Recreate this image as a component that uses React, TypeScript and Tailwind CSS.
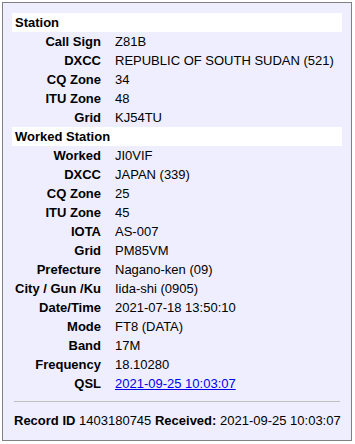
const station: [string, string][] = [
  ['Call Sign', 'Z81B'],
  ['DXCC', 'REPUBLIC OF SOUTH SUDAN (521)'],
  ['CQ Zone', '34'],
  ['ITU Zone', '48'],
  ['Grid', 'KJ54TU'],
];

const worked: [string, string][] = [
  ['Worked', 'JI0VIF'],
  ['DXCC', 'JAPAN (339)'],
  ['CQ Zone', '25'],
  ['ITU Zone', '45'],
  ['IOTA', 'AS-007'],
  ['Grid', 'PM85VM'],
  ['Prefecture', 'Nagano-ken (09)'],
  ['City / Gun /Ku', 'Iida-shi (0905)'],
  ['Date/Time', '2021-07-18 13:50:10'],
  ['Mode', 'FT8 (DATA)'],
  ['Band', '17M'],
  ['Frequency', '18.10280'],
];

function Header({ title }: { title: string }) {
  return <div className="h-[19px] bg-white pl-[3px] font-bold leading-[19px]">{title}</div>;
}

function Row({ label, children }: { label: string; children: React.ReactNode }) {
  return (
    <div className="grid h-[19px] grid-cols-[92px_1fr] leading-[19px]">
      <div className="whitespace-nowrap pr-[3px] text-right font-bold">{label}</div>
      <div className="whitespace-nowrap pl-[11px]">{children}</div>
    </div>
  );
}

export default function App() {
  return (
    <div
      className="ml-[2px] mt-[2px] h-[439px] w-[350px] border border-[#808080] bg-[#eeeeff] px-[9px] pt-[10px] text-[13px] text-black"
      style={{ fontFamily: '"Liberation Sans", Arial, sans-serif' }}
    >
      <Header title="Station" />
      {station.map(([l, v]) => (
        <Row key={'s' + l} label={l}>{v}</Row>
      ))}
      <Header title="Worked Station" />
      {worked.map(([l, v]) => (
        <Row key={'w' + l} label={l}>{v}</Row>
      ))}
      <Row label="QSL">
        <a href="#" className="text-[#0000ee] underline">2021-09-25 10:03:07</a>
      </Row>
      <div className="mx-[2px] mt-[8px] h-px bg-[#c0c0c0]" />
      <div className="mt-[9px] whitespace-nowrap pl-[2px] leading-[19px]">
        <b>Record ID</b> 1403180745 <b>Received:</b> 2021-09-25 10:03:07
      </div>
    </div>
  );
}
